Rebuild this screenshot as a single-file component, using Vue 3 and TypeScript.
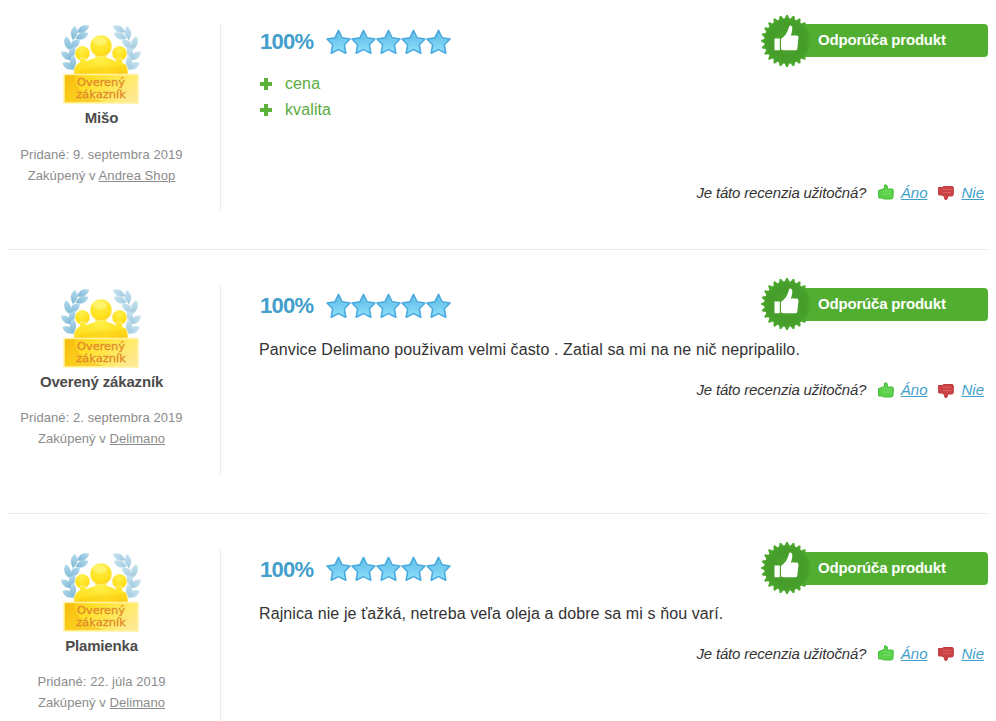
<script setup lang="ts">
interface Review {
  name: string
  date: string
  shop: string
  pros?: string[]
  text?: string
}

const reviews: Review[] = [
  { name: 'Mišo', date: '9. septembra 2019', shop: 'Andrea Shop', pros: ['cena', 'kvalita'] },
  {
    name: 'Overený zákazník',
    date: '2. septembra 2019',
    shop: 'Delimano',
    text: 'Panvice Delimano použivam velmi často . Zatial sa mi na ne nič nepripalilo.',
  },
  {
    name: 'Plamienka',
    date: '22. júla 2019',
    shop: 'Delimano',
    text: 'Rajnica nie je ťažká, netreba veľa oleja a dobre sa mi s ňou varí.',
  },
]

// Toothed outline of the round seal
const teeth = 24
const seal: string = Array.from({ length: teeth * 4 }, (_, i) => {
  const r = i % 4 < 2 ? 25.9 : 22.8
  const a = ((i - 0.5) / (teeth * 4)) * Math.PI * 2 - Math.PI / 2
  return `${(26 + r * Math.cos(a)).toFixed(2)},${(26 + r * Math.sin(a)).toFixed(2)}`
}).join(' ')

// Laurel leaves: x, y, rotation
const leaves: number[][] = [
  [22, 6, 62], [13, 10, 8], [21, 13, 66], [6.5, 20, -14], [14, 21, 44],
  [5.5, 33, -52], [11, 30, 22], [7.5, 43, -64], [12, 39, 0],
]
</script>

<template>
  <main class="reviews">
    <svg class="defs" width="0" height="0">
      <defs>
        <radialGradient id="gold" cx="45%" cy="25%" r="95%">
          <stop offset="0" stop-color="#fff04a" />
          <stop offset="0.6" stop-color="#ffe01c" />
          <stop offset="1" stop-color="#fac714" />
        </radialGradient>
        <linearGradient id="plate" x1="0" y1="0.2" x2="1" y2="0.6">
          <stop offset="0" stop-color="#fbc914" />
          <stop offset="0.3" stop-color="#ffdf26" />
          <stop offset="0.7" stop-color="#ffea5e" />
          <stop offset="1" stop-color="#ffe98e" />
        </linearGradient>
        <linearGradient id="leaf" x1="0" y1="0" x2="0" y2="1">
          <stop offset="0" stop-color="#b4daec" />
          <stop offset="1" stop-color="#7fb8d5" />
        </linearGradient>
        <linearGradient id="star" x1="0" y1="0" x2="0" y2="1">
          <stop offset="0" stop-color="#58b8e6" />
          <stop offset="1" stop-color="#90e0fa" />
        </linearGradient>
        <radialGradient id="seal" cx="50%" cy="50%" r="50%">
          <stop offset="0" stop-color="#52ab33" />
          <stop offset="0.6" stop-color="#459c2a" />
          <stop offset="0.82" stop-color="#47a12a" />
          <stop offset="1" stop-color="#52ae30" />
        </radialGradient>
      </defs>
    </svg>

    <article v-for="review in reviews" :key="review.name" class="review">
      <aside class="author">
        <svg class="badge" width="80" height="84" viewBox="0 0 80 84">
          <g
            v-for="side in [0, 1]"
            :key="side"
            :transform="side ? 'translate(80 0) scale(-1 1)' : ''"
            :opacity="side ? 0.72 : 1"
          >
            <path d="M21 7 C9 15 5 31 13 48" fill="none" stroke="#b5d8e8" stroke-width="1" />
            <path
              v-for="(l, i) in leaves"
              :key="i"
              d="M0 -7 C4.2 -3 4.2 2.5 0 7 C-4.2 2.5 -4.2 -3 0 -7Z"
              fill="url(#leaf)"
              :transform="`translate(${l[0]} ${l[1]}) rotate(${l[2]})`"
            />
          </g>
          <g fill="url(#gold)" stroke="#fff6b0" stroke-width=".6">
            <circle cx="21.5" cy="30.5" r="7.4" />
            <circle cx="58.5" cy="30.5" r="7.4" />
            <path d="M13 54 C12.5 44 15 41 19 39.5 V35 H25 V38 H55 V35 H61 V39.5 C65 41 67.5 44 67 54Z" />
            <path d="M18 54 C19 41 25 37 34.5 35 V29 H45.5 V35 C55 37 61 41 62 54Z" stroke="none" />
            <circle cx="40" cy="23" r="10.8" />
          </g>
          <path d="M14 53 C24 39 45 48 66 41 L66 54Z" fill="#f9bd16" opacity=".25" />
          <ellipse cx="39" cy="18" rx="7" ry="4.5" fill="#fffa96" opacity=".5" />
          <rect x="3" y="51.5" width="74" height="28.5" fill="url(#plate)" stroke="#fff2a4" stroke-width="1.5" />
          <path d="M4 79 L4 52 L14 52 C13 65 25 75 45 79Z" fill="#f5ae0a" opacity=".4" />
          <text x="16" y="63.4" textLength="48" lengthAdjust="spacingAndGlyphs">Overený</text>
          <text x="15" y="75.2" textLength="50" lengthAdjust="spacingAndGlyphs">zákazník</text>
        </svg>
        <strong class="name">{{ review.name }}</strong>
        <p class="meta">
          Pridané: {{ review.date }}<br />
          Zakúpený v <a class="shop">{{ review.shop }}</a>
        </p>
      </aside>

      <section class="content">
        <header class="head">
          <span class="percent">100%</span>
          <span class="stars">
            <svg v-for="n in 5" :key="n" width="25" height="26" viewBox="0 0 25 26">
              <path
                d="M12.5 1.4 L16.1 8.9 L24 10 L18.4 15.8 L19.8 24.2 L12.5 20.6 L5.2 24.2 L6.6 15.8 L1 10 L8.9 8.9Z"
                fill="url(#star)"
                stroke="#4baade"
                stroke-width="1.6"
                stroke-linejoin="round"
              />
              <path d="M12.5 4.5 L15 10 L20.5 11" fill="none" stroke="#8ed4f1" stroke-width="1" opacity=".6" />
            </svg>
          </span>
          <span class="recommend">
            <svg class="seal" width="52" height="52" viewBox="0 0 52 52">
              <polygon :points="seal" fill="url(#seal)" />
              <path
                d="M13.5 23.5 H18.8 V35.3 H13.5Z M20 24 C24 21.5 26.5 17.5 28 12 C28.3 9.8 31.5 10.1 31.3 13.5 C31.2 16.5 30.5 18.5 29.8 20.5 H35.5 C37.3 20.5 37.5 21.5 37.4 23 L36.4 33 C36.2 35 35.5 35.3 34 35.3 H24 C22 35.3 21.5 35 20 34.5Z"
                fill="#fff"
              />
            </svg>
            <span class="ribbon">Odporúča produkt</span>
          </span>
        </header>

        <ul v-if="review.pros" class="pros">
          <li v-for="pro in review.pros" :key="pro">
            <svg width="12" height="12" viewBox="0 0 12 12">
              <path d="M4 0 H8 V4 H12 V8 H8 V12 H4 V8 H0 V4 H4Z" fill="#5cb13a" />
            </svg>
            <span>{{ pro }}</span>
          </li>
        </ul>
        <p v-else class="text">{{ review.text }}</p>

        <footer class="useful">
          <span class="question">Je táto recenzia užitočná?</span>
          <svg class="thumb up" width="16" height="16" viewBox="0 0 16 16">
            <path d="M.5 6.5 L4 5.5 L6.5 4 L6.5 1 Q8.5 .2 9.3 2 V5 H14 Q15.5 5 15.3 7 L15 13 Q15 15 13 15 H6 L4 14 H.7Z" fill="#5bd04b" stroke="#45bd3a" />
            <path d="M5 7 H13 M5 10 H13" stroke="#79df68" />
          </svg>
          <a class="vote yes">Áno</a>
          <svg class="thumb down" width="16" height="16" viewBox="0 0 16 16">
            <path d="M.5 2.5 H4 L6 1.5 H14 Q15.3 1.5 15.3 3 V9.5 Q15.3 11 13.5 11 H9.5 V13 Q9 15 7 14.5 L6.3 11.5 L4 10 H.7Z" fill="#cb4345" stroke="#c03a40" />
            <path d="M5 4.5 H13 M5 7.5 H13" stroke="#d9605f" />
          </svg>
          <a class="vote no">Nie</a>
        </footer>
      </section>
    </article>
  </main>
</template>

<style>
body {
  background: #fff;
  overflow: hidden;
}
</style>

<style scoped>
.reviews {
  height: 721px;
  overflow: hidden;
  font-family: 'Liberation Sans', Arial, sans-serif;
  color: #333;
}
.defs {
  display: block;
}
.review {
  box-sizing: border-box;
  display: flex;
  height: 263.6px;
  margin: 0 8px;
  padding: 35px 0 38px;
  border-bottom: 1px solid #ebebeb;
}
.review:first-of-type {
  margin-top: -13.6px;
}
.author {
  box-sizing: border-box;
  display: flex;
  flex-direction: column;
  align-items: center;
  width: 213px;
  padding: 3px 25px 0 0;
  border-right: 1px solid #ebebeb;
  text-align: center;
}
.review:first-of-type .author {
  margin-top: 3px;
  padding-top: 0;
}
.badge {
  display: block;
  flex: none;
  margin: -1px 1px 1px 0;
}
.badge text {
  font: 10px 'DejaVu Sans', sans-serif;
  fill: #e28a2b;
  stroke: #e28a2b;
  stroke-width: 0.3px;
}
.name {
  color: #4c4c4c;
  font-size: 15px;
  line-height: 20px;
  letter-spacing: -0.17px;
}
.meta {
  margin: 15.4px 0 0;
  color: #8b8b8b;
  font-size: 13px;
  line-height: 21px;
  letter-spacing: 0.07px;
  white-space: nowrap;
}
.shop {
  text-decoration: underline;
}
.content {
  flex: 1;
  min-width: 0;
  padding-left: 38px;
}
.head {
  display: flex;
  height: 45px;
}
.percent {
  width: 66px;
  padding: 8px 0 0 1px;
  color: #429fcb;
  font-size: 22px;
  font-weight: bold;
  line-height: 26px;
  letter-spacing: -0.7px;
}
.stars {
  display: flex;
  padding-top: 7.6px;
}
.recommend {
  display: flex;
  width: 227px;
  height: 52px;
  margin: -6.6px 0 0 auto;
  align-items: center;
}
.seal {
  position: relative;
  z-index: 1;
  flex: none;
}
.ribbon {
  flex: 1;
  height: 33px;
  margin-left: -26px;
  padding-left: 31px;
  border-radius: 4px;
  background: #52ae30;
  color: #fff;
  font-size: 15px;
  font-weight: bold;
  line-height: 32px;
  letter-spacing: -0.19px;
}
.pros {
  height: 99px;
  margin: 5px 0 0;
  padding: 0 0 0 1px;
  list-style: none;
  color: #5aac3e;
  font-size: 16px;
  line-height: 26px;
  letter-spacing: 0.11px;
}
.pros li {
  display: flex;
  align-items: center;
  gap: 13px;
}
.text {
  margin: 8px 0 0;
  font-size: 16px;
  line-height: 24px;
  letter-spacing: 0.11px;
  white-space: nowrap;
}
.useful {
  display: flex;
  align-items: center;
  justify-content: flex-end;
  height: 20px;
  margin-top: 17.6px;
  padding-right: 4px;
  font-size: 15px;
  font-style: italic;
}
.question {
  letter-spacing: -0.17px;
}
.pros + .useful {
  margin-top: 12px;
}
.thumb {
  flex: none;
}
.up {
  margin: 0 7px 0 11.5px;
}
.down {
  margin: 2px 7px 0 11px;
}
.vote {
  color: #429fcb;
  text-decoration: underline;
}
</style>
